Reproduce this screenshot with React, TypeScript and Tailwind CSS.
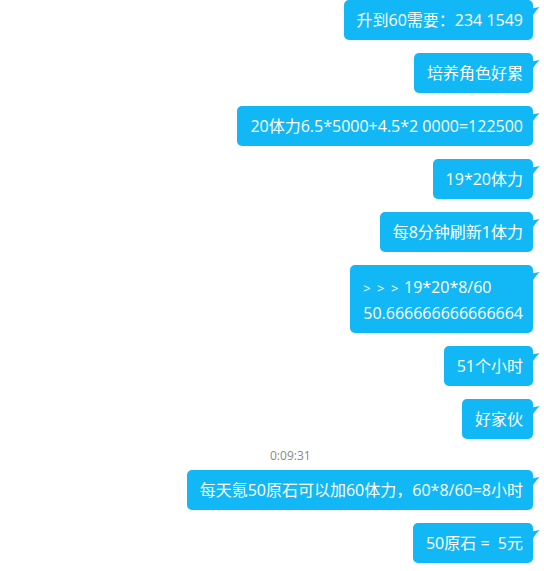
import React from "react";

const font = { fontFamily: '"Open Sans", "Noto Sans CJK SC", sans-serif' };

const Tail = () => (
  <svg
    className="absolute right-[-7px] top-[7px]"
    width="8"
    height="10"
    viewBox="0 0 8 10"
  >
    <path d="M0 1.5 L7.5 0 Q4 3.5 0 9.5 Z" fill="#12b7f5" />
  </svg>
);

const Bubble = ({ lines }: { lines: React.ReactNode[] }) => (
  <div className="relative mb-[13px] max-w-[480px]">
    <div
      className={`rounded-[5px] bg-[#12b7f5] pl-[13px] pr-[10px] text-[16px] text-white whitespace-pre ${
        lines.length > 1 ? "pt-[9px] pb-[7px]" : "py-[7px]"
      }`}
    >
      {lines.map((l, i) => (
        <div key={i} className="h-[26px] leading-[26px]">
          {l}
        </div>
      ))}
    </div>
    <Tail />
  </div>
);

const messages: React.ReactNode[][] = [
  ["升到60需要：234 1549"],
  ["培养角色好累"],
  ["20体力6.5*5000+4.5*2 0000=122500"],
  ["19*20体力"],
  ["每8分钟刷新1体力"],
  [
    <>
      <span className="text-[13px] leading-[26px] tracking-[1.5px]">{"> > >"}</span> 19*20*8/60
    </>,
    "50.666666666666664",
  ],
  ["51个小时"],
  ["好家伙"],
];

const later: React.ReactNode[][] = [
  ["每天氪50原石可以加60体力，60*8/60=8小时"],
  ["50原石 =  5元"],
];

export default function App() {
  return (
    <div className="w-[544px] h-[571px] bg-white overflow-hidden" style={font}>
      <div className="flex flex-col items-end pr-[11px]">
        {messages.map((m, i) => (
          <Bubble key={i} lines={m} />
        ))}
        <div className="self-stretch mt-[-5px] mb-[5px] h-[18px] pl-[270px] text-[12px] leading-[18px] text-[#888888]">
          0:09:31
        </div>
        {later.map((m, i) => (
          <Bubble key={i} lines={m} />
        ))}
      </div>
    </div>
  );
}
